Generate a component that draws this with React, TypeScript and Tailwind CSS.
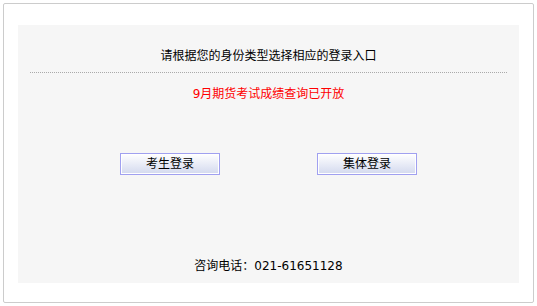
export default function App() {
  const font = { fontFamily: '"DejaVu Sans", "Noto Sans CJK SC", sans-serif' };
  return (
    <div className="w-[537px] h-[306px] bg-white p-[3px]" style={font}>
      <div className="w-[531px] h-[300px] border border-[#cccccc] rounded-[2px] bg-white pt-[21px] pb-[19px] px-[14px]">
        <div className="h-full bg-[#f6f6f6] flex flex-col">
          <div className="mx-3 pt-[21px] pb-[6px] border-b border-dotted border-[#aaaaaa] text-center text-[12px] leading-[20px] text-black">
            请根据您的身份类型选择相应的登录入口
          </div>
          <div className="mt-[11px] text-center text-[12px] leading-[20px] text-[#ff0000]">
            9月期货考试成绩查询已开放
          </div>
          <div className="mt-[49px] flex justify-center gap-[97px]">
            <button className="w-[100px] h-[22px] border border-[#a0a0f0] shadow-[inset_0_0_0_1px_#ffffff] bg-gradient-to-b from-white to-[#d3d9ee] text-[12px] leading-[18px] text-black" style={font}>
              考生登录
            </button>
            <button className="w-[100px] h-[22px] border border-[#a0a0f0] shadow-[inset_0_0_0_1px_#ffffff] bg-gradient-to-b from-white to-[#d3d9ee] text-[12px] leading-[18px] text-black" style={font}>
              集体登录
            </button>
          </div>
          <div className="mt-[81px] text-center text-[12px] leading-[20px] text-black">
            咨询电话：021-61651128
          </div>
        </div>
      </div>
    </div>
  );
}
